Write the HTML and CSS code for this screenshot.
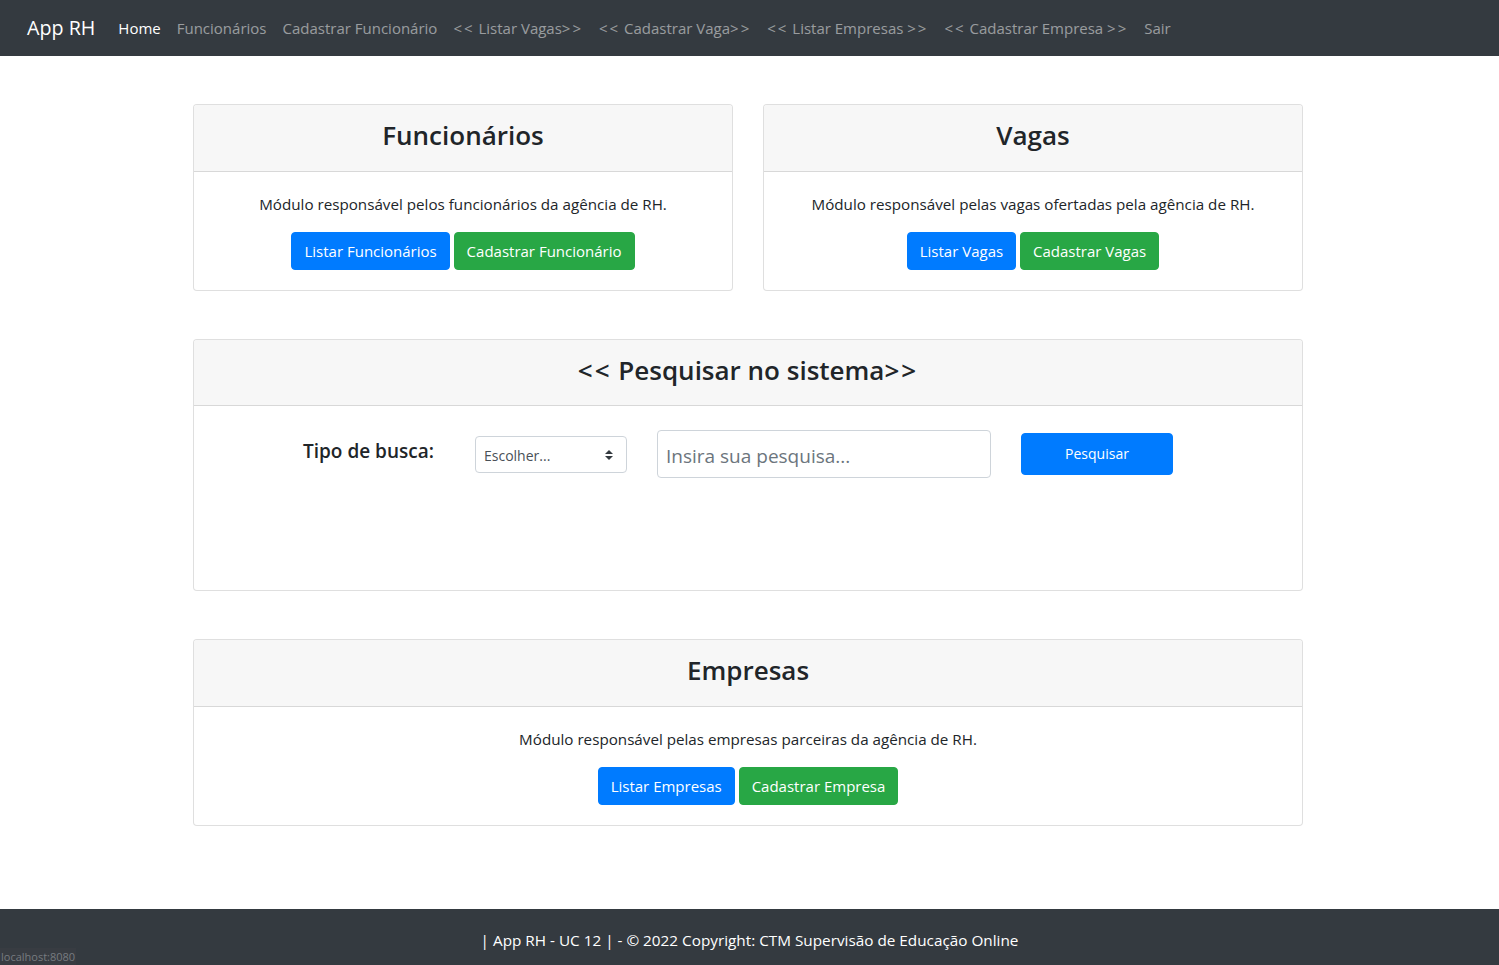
FILE: index.html
```html
<!DOCTYPE html>
<html lang="pt-br">
<head>
<meta charset="utf-8">
<title>App RH</title>
<link rel="stylesheet" href="styles.css">
</head>
<body>
<nav class="navbar">
  <a class="brand" href="#">App RH</a>
  <ul class="nav">
    <li><a class="nav-link active" href="#">Home</a></li>
    <li><a class="nav-link" href="#">Funcionários</a></li>
    <li><a class="nav-link" href="#">Cadastrar Funcionário</a></li>
    <li><a class="nav-link" href="#"><span class="arr">&lt;&lt;</span> Listar Vagas<span class="arr">&gt;&gt;</span></a></li>
    <li><a class="nav-link" href="#"><span class="arr">&lt;&lt;</span> Cadastrar Vaga<span class="arr">&gt;&gt;</span></a></li>
    <li><a class="nav-link" href="#"><span class="arr">&lt;&lt;</span> Listar Empresas <span class="arr">&gt;&gt;</span></a></li>
    <li><a class="nav-link" href="#"><span class="arr">&lt;&lt;</span> Cadastrar Empresa <span class="arr">&gt;&gt;</span></a></li>
    <li><a class="nav-link" href="#">Sair</a></li>
  </ul>
</nav>

<main class="container">
  <div class="row">
    <section class="card">
      <div class="card-header"><h3>Funcionários</h3></div>
      <div class="card-body">
        <p>Módulo responsável pelos funcionários da agência de RH.</p>
        <a class="btn btn-primary" href="#">Listar Funcionários</a>
        <a class="btn btn-success" href="#">Cadastrar Funcionário</a>
      </div>
    </section>
    <section class="card">
      <div class="card-header"><h3>Vagas</h3></div>
      <div class="card-body">
        <p>Módulo responsável pelas vagas ofertadas pela agência de RH.</p>
        <a class="btn btn-primary" href="#">Listar Vagas</a>
        <a class="btn btn-success" href="#">Cadastrar Vagas</a>
      </div>
    </section>
  </div>

  <section class="card">
    <div class="card-header"><h3><span class="arr">&lt;&lt;</span> Pesquisar no sistema<span class="arr">&gt;&gt;</span></h3></div>
    <div class="card-body search-body">
      <form class="search-form">
        <label class="search-label">Tipo de busca:</label>
        <div class="select">
          <span>Escolher...</span>
          <svg class="select-arrows" width="8" height="10" viewBox="0 0 8 10"><path d="M4 0 L8 4 H0 Z M4 10 L0 6 H8 Z" fill="#343a40"/></svg>
        </div>
        <input class="search-input" type="text" placeholder="Insira sua pesquisa...">
        <button class="btn btn-primary btn-search" type="button">Pesquisar</button>
      </form>
    </div>
  </section>

  <section class="card">
    <div class="card-header"><h3>Empresas</h3></div>
    <div class="card-body">
      <p>Módulo responsável pelas empresas parceiras da agência de RH.</p>
      <a class="btn btn-primary" href="#">Listar Empresas</a>
      <a class="btn btn-success" href="#">Cadastrar Empresa</a>
    </div>
  </section>
</main>

<footer class="footer">| App RH - UC 12 | - © 2022 Copyright: CTM Supervisão de Educação Online</footer>
<div class="status">localhost:8080</div>
</body>
</html>
```

FILE: styles.css
```css
* { box-sizing: border-box; }
html, body { margin: 0; padding: 0; }
body {
  font-family: "Open Sans", "Noto Sans", "Liberation Sans", sans-serif;
  font-size: 15px;
  line-height: 24px;
  color: #212529;
  background: #fff;
}
a { text-decoration: none; }
.arr { letter-spacing: 2px; }

.navbar {
  height: 56px;
  background: #343a40;
  display: flex;
  align-items: center;
  padding: 0 27px;
}
.brand {
  color: #fff;
  font-size: 19.7px;
  line-height: 30px;
  margin-right: 15px;
}
.nav {
  list-style: none;
  margin: 0;
  padding: 0;
  display: flex;
}
.nav-link {
  display: block;
  padding: 8px 8px;
  color: rgba(255,255,255,.5);
  font-size: 15px;
}
.nav-link.active { color: #fff; }

.container {
  width: 1110px;
  margin: 48px 0 83px calc((100% - 1113px) / 2);
  display: flex;
  flex-direction: column;
  gap: 48px;
}
.row {
  display: flex;
  gap: 30px;
}
.row .card { flex: 1; }

.card {
  border: 1px solid rgba(0,0,0,.125);
  border-radius: 4px;
  background: #fff;
}
.card-header {
  background: #f7f7f7;
  border-bottom: 1px solid rgba(0,0,0,.125);
  padding: 14px 20px 10px;
  text-align: center;
  border-radius: 3px 3px 0 0;
}
.card-header h3 {
  margin: 0 0 8px;
  font-size: 26px;
  font-weight: 600;
  line-height: 33.6px;
}
.card-body {
  padding: 20px;
  text-align: center;
}
.card-body p { margin: 0 0 16px; font-size: 15.2px; }

.btn {
  display: inline-block;
  padding: 6px 12px;
  font-size: 15px;
  line-height: 24px;
  border: 1px solid transparent;
  border-radius: 4px;
  color: #fff;
  font-family: inherit;
}
.btn-primary { background: #007bff; border-color: #007bff; }
.btn-success { background: #28a745; border-color: #28a745; }

.search-body { padding: 24px 20px 112px 109px; text-align: left; }
.search-form {
  display: flex;
  align-items: center;
  height: 48px;
}
.search-label {
  font-size: 19px;
  font-weight: 600;
  width: 172px;
  margin-top: -6px;
}
.select {
  width: 152px;
  height: 37px;
  border: 1px solid #ced4da;
  border-radius: 4px;
  display: flex;
  align-items: center;
  justify-content: space-between;
  padding: 3px 13px 0 8px;
  font-size: 14px;
  color: #495057;
  margin-right: 30px;
}
.select-arrows { margin-top: -2px; }
.search-input {
  width: 334px;
  height: 48px;
  border: 1px solid #ced4da;
  border-radius: 4px;
  padding: 4px 8px 0;
  font-family: inherit;
  font-size: 19px;
  color: #495057;
  margin-right: 30px;
  outline: none;
}
.search-input::placeholder { color: #6c757d; }
.btn-search {
  width: 152px;
  height: 42px;
  text-align: center;
  font-size: 14px;
}

.footer {
  background: #343a40;
  color: #fff;
  text-align: center;
  height: 56px;
  padding-top: 19px;
  font-size: 15.3px;
  line-height: 24px;
}
.status {
  position: fixed;
  left: 0;
  bottom: 0;
  padding: 0 1px;
  height: 17px;
  font-size: 11px;
  line-height: 17px;
  color: #777b80;
  background: #383c42;
  font-family: "Open Sans", sans-serif;
}
```
